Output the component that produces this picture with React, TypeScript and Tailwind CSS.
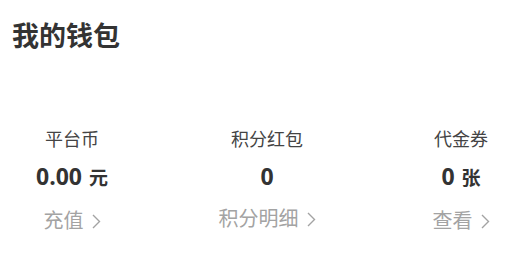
import React from "react"

type WalletItem = {
  label: string
  value: string
  unit?: string
  action: string
}

const items: WalletItem[] = [
  { label: "平台币", value: "0.00", unit: "元", action: "充值" },
  { label: "积分红包", value: "0", action: "积分明细" },
  { label: "代金券", value: "0", unit: "张", action: "查看" },
]

function Chevron() {
  return (
    <svg width="9" height="15" viewBox="0 0 9 15" fill="none" className="ml-[8px]">
      <path d="M1 1 L7.5 7.5 L1 14" stroke="#a3a3a3" strokeWidth="1.4" />
    </svg>
  )
}

export default function App() {
  const font = { fontFamily: '"Noto Sans", "Noto Sans CJK SC", sans-serif' }
  return (
    <div className="w-[514px] h-[255px] bg-white overflow-hidden" style={font}>
      {/* Header */}
      <div className="pt-[19px] pl-[12px]">
        <h1 className="text-[27px] leading-[34px] font-bold text-[#333333]">我的钱包</h1>
      </div>

      {/* Balances */}
      <div className="flex pl-[22px] mt-[74px]">
        {items.map((item, i) => (
          <div
            key={item.label}
            className={
              "w-[100px] shrink-0 flex flex-col items-center whitespace-nowrap " +
              (i === 1 ? "ml-[95px]" : i === 2 ? "ml-[94px]" : "")
            }
          >
            <div className="text-[18px] leading-[24px] text-[#444444]">{item.label}</div>
            <div className="mt-[10px] flex items-baseline leading-[30px] text-[#333333]">
              <span className="text-[23px] font-bold" style={{ fontFamily: '"Open Sans", "Noto Sans", sans-serif' }}>
                {item.value}
              </span>
              {item.unit && <span className="ml-[7px] text-[19px] font-semibold">{item.unit}</span>}
            </div>
            <div className="mt-[15px] flex items-center text-[20px] leading-[26px] text-[#a3a3a3]">
              <span>{item.action}</span>
              <Chevron />
            </div>
          </div>
        ))}
      </div>
    </div>
  )
}
